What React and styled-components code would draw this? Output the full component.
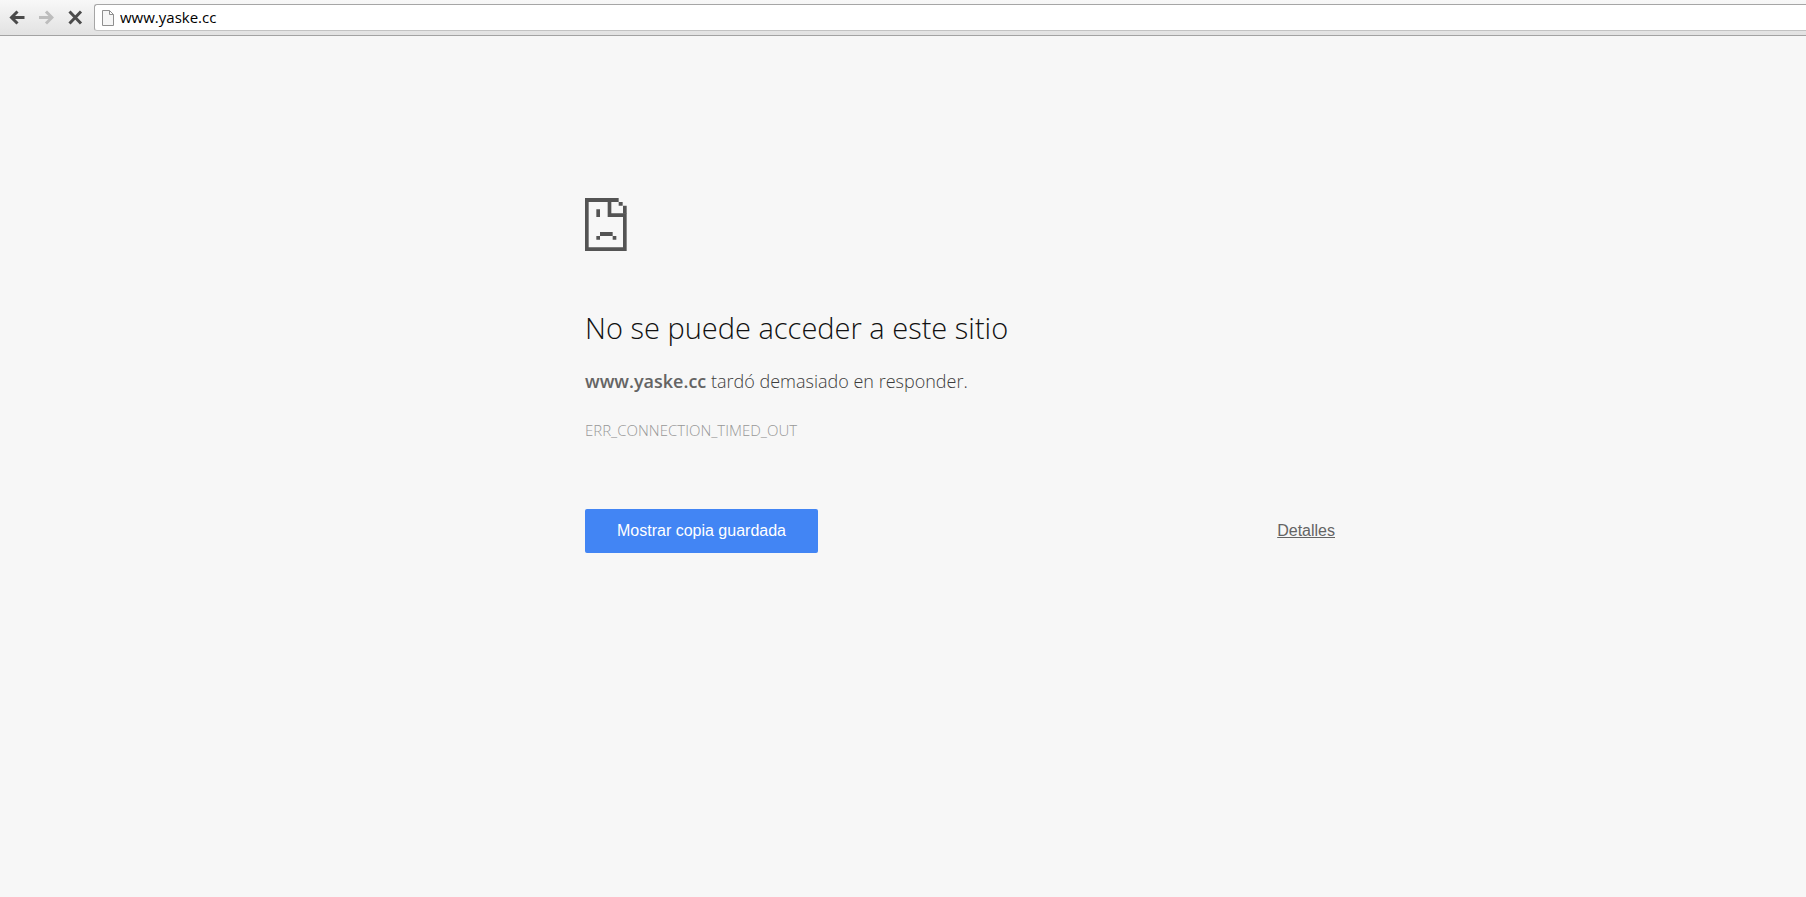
import React from 'react';
import styled, { createGlobalStyle } from 'styled-components';

const GlobalStyle = createGlobalStyle`
  *, *::before, *::after { box-sizing: border-box; }
  body { margin: 0; background: #f7f7f7; }
`;

const uiFont = '"Segoe UI", "Open Sans", "Noto Sans", sans-serif';
const formFont = 'Arial, "Liberation Sans", sans-serif';

const Toolbar = styled.header`
  display: flex;
  align-items: flex-start;
  height: 36px;
  padding: 4px 0 0 5px;
  background: linear-gradient(#f8f8f8, #e2e2e2);
  border-bottom: 1px solid #a3a3a3;
`;

const NavButtons = styled.nav`
  display: flex;
  gap: 5px;
  width: 89px;
`;

const NavButton = styled.button`
  width: 24px;
  height: 27px;
  padding: 0;
  border: 0;
  background: none;
  color: ${({ disabled }) => (disabled ? '#bdbdbd' : '#4b4b4b')};

  svg { display: block; margin: 0 auto; }
`;

const AddressBar = styled.form`
  display: flex;
  flex: 1;
  align-items: center;
  gap: 6px;
  height: 27px;
  padding-left: 7px;
  background: #fff;
  border: 1px solid #a6a6a6;
  border-right: 0;
  border-bottom-color: #c3c3c3;
  border-radius: 3px 0 0 3px;
`;

const AddressInput = styled.input`
  flex: 1;
  min-width: 0;
  height: 20px;
  padding: 0 0 2px;
  border: 0;
  outline: 0;
  background: none;
  color: #000;
  font: 15px/18px ${uiFont};
`;

const Page = styled.div`
  padding: 162px 0 64px 114px;
`;

const ErrorPanel = styled.main`
  max-width: 750px;
  margin: 0 auto;
  font-family: ${uiFont};
  font-weight: 300;
`;

const SadPage = styled.svg`
  display: block;
  fill: #545454;
`;

const Title = styled.h1`
  margin: 57px 0 19px;
  color: #111;
  font-size: 29px;
  font-weight: 300;
  line-height: 40px;
`;

const Message = styled.p`
  margin: 0;
  color: #3c3c3c;
  font-size: 18px;
  line-height: 28px;

  strong {
    color: #646464;
    font-weight: 600;
  }
`;

const ErrorCode = styled.p`
  margin: 25px 0 0;
  color: #979797;
  font-size: 15px;
  line-height: 20px;
`;

const Actions = styled.div`
  display: flex;
  align-items: center;
  justify-content: space-between;
  margin-top: 69px;
`;

const PrimaryButton = styled.button`
  height: 44px;
  padding: 0 32px;
  border: 0;
  border-radius: 2px;
  background: #4285f4;
  color: #fff;
  font: 16px/20px ${formFont};
`;

const DetailsButton = styled.button`
  padding: 0;
  border: 0;
  background: none;
  color: #646464;
  font: 16px/20px ${formFont};
  text-decoration: underline;
`;

function ArrowIcon({ flipped }) {
  return (
    <svg width="16" height="27" viewBox="0 0 16 27" fill="none" stroke="currentColor" strokeWidth="3" aria-hidden="true">
      <path d={flipped ? 'M1 13.5H13M8 7.5L14 13.5L8 19.5' : 'M15.5 13.5H3M8.5 7.5L2.5 13.5L8.5 19.5'} />
    </svg>
  );
}

function StopIcon() {
  return (
    <svg width="16" height="27" viewBox="0 0 16 27" fill="none" stroke="currentColor" strokeWidth="3" aria-hidden="true">
      <path d="M2.5 7.5L14 19.5M14 7.5L2.5 19.5" />
    </svg>
  );
}

function DocumentIcon() {
  return (
    <svg width="12" height="16" viewBox="0 0 12 16" fill="#f6f6f6" stroke="#8f8f8f" aria-hidden="true">
      <path d="M.5 .5H7.5L11.5 4.5V15.5H.5ZM7.5 .5V4.5H11.5" />
    </svg>
  );
}

function SadPageIcon() {
  return (
    <SadPage width="42" height="53" viewBox="30 24 126 159" aria-hidden="true">
      <path d="M30 24H131V36H109V70H155V183H30ZM41 36V172H144V81H98V36Z" fillRule="evenodd" />
      <path d="M131 36H143V47H131ZM144 47H155V71H144ZM64 58H75V81H64ZM75 126H113V138H75ZM64 138H75V149H64ZM113 138H124V149H113Z" />
    </SadPage>
  );
}

export default function App() {
  return (
    <>
      <GlobalStyle />
      <Toolbar>
        <NavButtons>
          <NavButton type="button" aria-label="Atrás"><ArrowIcon /></NavButton>
          <NavButton type="button" aria-label="Adelante" disabled><ArrowIcon flipped /></NavButton>
          <NavButton type="button" aria-label="Detener"><StopIcon /></NavButton>
        </NavButtons>
        <AddressBar onSubmit={(e) => e.preventDefault()}>
          <DocumentIcon />
          <AddressInput aria-label="Dirección" defaultValue="www.yaske.cc" spellCheck={false} />
        </AddressBar>
      </Toolbar>
      <Page>
        <ErrorPanel>
          <SadPageIcon />
          <Title>No se puede acceder a este sitio</Title>
          <Message><strong>www.yaske.cc</strong> tardó demasiado en responder.</Message>
          <ErrorCode>ERR_CONNECTION_TIMED_OUT</ErrorCode>
          <Actions>
            <PrimaryButton type="button">Mostrar copia guardada</PrimaryButton>
            <DetailsButton type="button">Detalles</DetailsButton>
          </Actions>
        </ErrorPanel>
      </Page>
    </>
  );
}
